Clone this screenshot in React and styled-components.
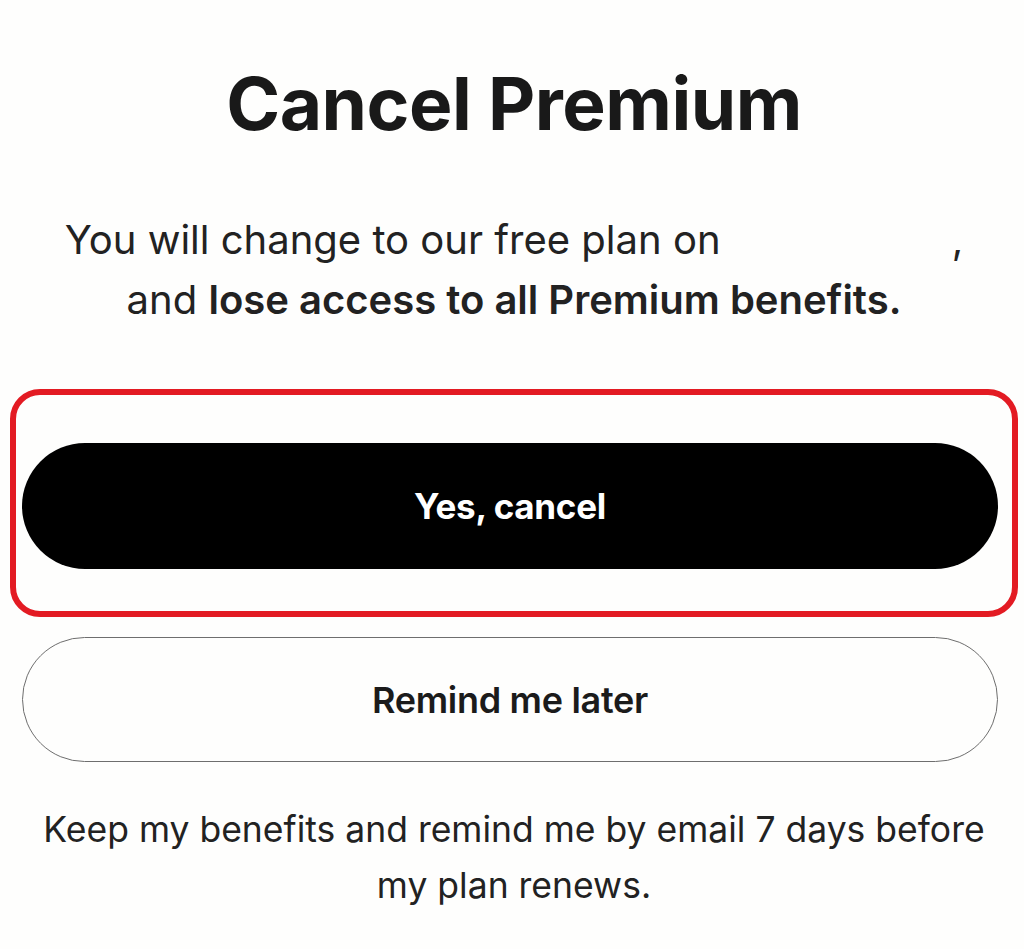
import React from "react";
import styled, { createGlobalStyle } from "styled-components";

const Global = createGlobalStyle`
  html, body { margin: 0; padding: 0; background: #fefefd; }
  body { font-family: Inter, "Noto Sans", sans-serif; color: #1b1b1b; }
`;

const Page = styled.main`
  width: 1024px;
  height: 949px;
  box-sizing: border-box;
  padding: 62px 6px 0 10px;
  display: flex;
  flex-direction: column;
  align-items: stretch;
`;

const Title = styled.h1`
  margin: 0;
  text-align: center;
  font-size: 73px;
  line-height: 84px;
  font-weight: 700;
  letter-spacing: -0.5px;
  color: #191919;
`;

const Description = styled.p`
  margin: 64px 0 0 0;
  text-align: center;
  font-size: 40px;
  line-height: 60px;
  font-weight: 400;
  color: #222;
`;

const Redacted = styled.span`
  display: inline-block;
  width: 220px;
`;

const Strong = styled.strong`
  font-weight: 600;
`;

const Highlight = styled.div`
  margin-top: 59px;
  border: 6px solid #e31b23;
  border-radius: 30px;
  padding: 48px 14px 42px 6px;
`;

const PillButton = styled.button`
  display: block;
  width: 100%;
  height: ${(p) => p.$height}px;
  border-radius: 999px;
  font-family: Inter, "Noto Sans", sans-serif;
  font-size: ${(p) => (p.$primary ? 35 : 36)}px;
  font-weight: ${(p) => (p.$primary ? 700 : 600)};
  letter-spacing: -0.3px;
  cursor: pointer;
  background: ${(p) => (p.$primary ? "#000" : "transparent")};
  color: ${(p) => (p.$primary ? "#fff" : "#1b1b1b")};
  border: ${(p) => (p.$primary ? "none" : "1.5px solid #6e6e6e")};
`;

const SecondaryWrap = styled.div`
  margin-top: 20px;
  padding: 0 20px 0 12px;
`;

const Note = styled.p`
  margin: 40px 0 0 0;
  text-align: center;
  font-size: 35.5px;
  line-height: 56px;
  color: #222;
`;

export default function App() {
  return (
    <>
      <Global />
      <Page>
        <Title>Cancel Premium</Title>
        <Description>
          You will change to our free plan on <Redacted />,
          <br />
          and <Strong>lose access to all Premium benefits.</Strong>
        </Description>
        <Highlight>
          <PillButton $primary $height={126}>Yes, cancel</PillButton>
        </Highlight>
        <SecondaryWrap>
          <PillButton $height={125}>Remind me later</PillButton>
        </SecondaryWrap>
        <Note>
          Keep my benefits and remind me by email 7 days before
          <br />
          my plan renews.
        </Note>
      </Page>
    </>
  );
}
